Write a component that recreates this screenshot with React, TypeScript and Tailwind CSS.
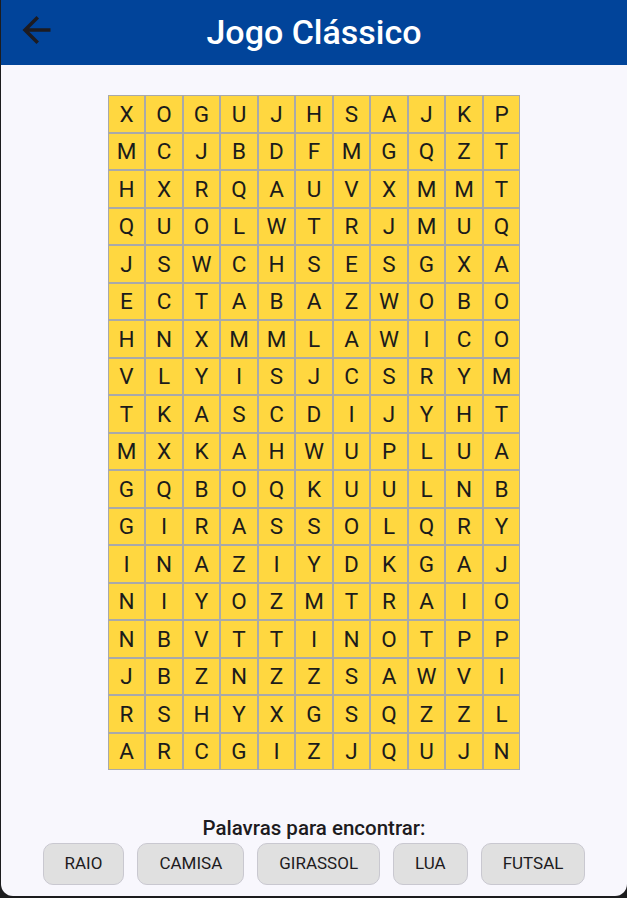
import React from "react";

const ROWS = [
  "XOGUJHSAJKP",
  "MCJBDFMGQZT",
  "HXRQAUVXMMT",
  "QUOLWTRJMUQ",
  "JSWCHSESGXA",
  "ECTABAZWOBO",
  "HNXMMLAWICO",
  "VLYISJCSRYM",
  "TKASCDIJYHT",
  "MXKAHWUPLUA",
  "GQBOQKUULNB",
  "GIRASSOLQRY",
  "INAZIYDKGAJ",
  "NIYOZMTRAIO",
  "NBVTTINOTPP",
  "JBZNZZSAWVI",
  "RSHYXGSQZZL",
  "ARCGIZJQUJN",
];

const WORDS = ["RAIO", "CAMISA", "GIRASSOL", "LUA", "FUTSAL"];

export default function App() {
  return (
    <div className="w-[627px] h-[898px] bg-[#1c1c1e] overflow-hidden" style={{ fontFamily: "Roboto, 'Noto Sans', sans-serif" }}>
      <div className="ml-[1px] w-[626px] h-[896px] bg-[#f8f7fd] rounded-b-[12px] flex flex-col overflow-hidden">
        <header className="relative h-[65px] bg-[#01449a] flex items-center justify-center shrink-0">
          <svg className="absolute left-[21px] top-[16px]" width="29" height="28" viewBox="4 4 16 16">
            <path d="M20 11H7.83l5.59-5.59L12 4l-8 8 8 8 1.41-1.41L7.83 13H20v-2z" fill="#1d1b20" />
          </svg>
          <h1 className="text-white text-[34px] font-medium leading-none mt-[-2px]">Jogo Clássico</h1>
        </header>
        <div className="flex justify-center pt-[30px]">
          <div className="grid grid-cols-[repeat(11,37.5px)] auto-rows-[37.5px]">
            {ROWS.flatMap((row, r) =>
              row.split("").map((ch, c) => (
                <div
                  key={`${r}-${c}`}
                  className="border border-[#a9a9a9] bg-[#ffd740] flex items-center justify-center text-[22.5px] text-[#1b1b1b] leading-none"
                >
                  {ch}
                </div>
              ))
            )}
          </div>
        </div>
        <div className="mt-[48px] text-center text-[20.5px] font-medium text-[#1d1b20] leading-none">Palavras para encontrar:</div>
        <div className="mt-[4px] flex justify-center gap-[13px]">
          {WORDS.map((w) => (
            <div
              key={w}
              className="h-[42px] px-[21px] flex items-center justify-center rounded-[10px] bg-[#e0e0e0] border border-[#c9c8d0] text-[17px] text-[#1d1b20]"
            >
              {w}
            </div>
          ))}
        </div>
      </div>
    </div>
  );
}
